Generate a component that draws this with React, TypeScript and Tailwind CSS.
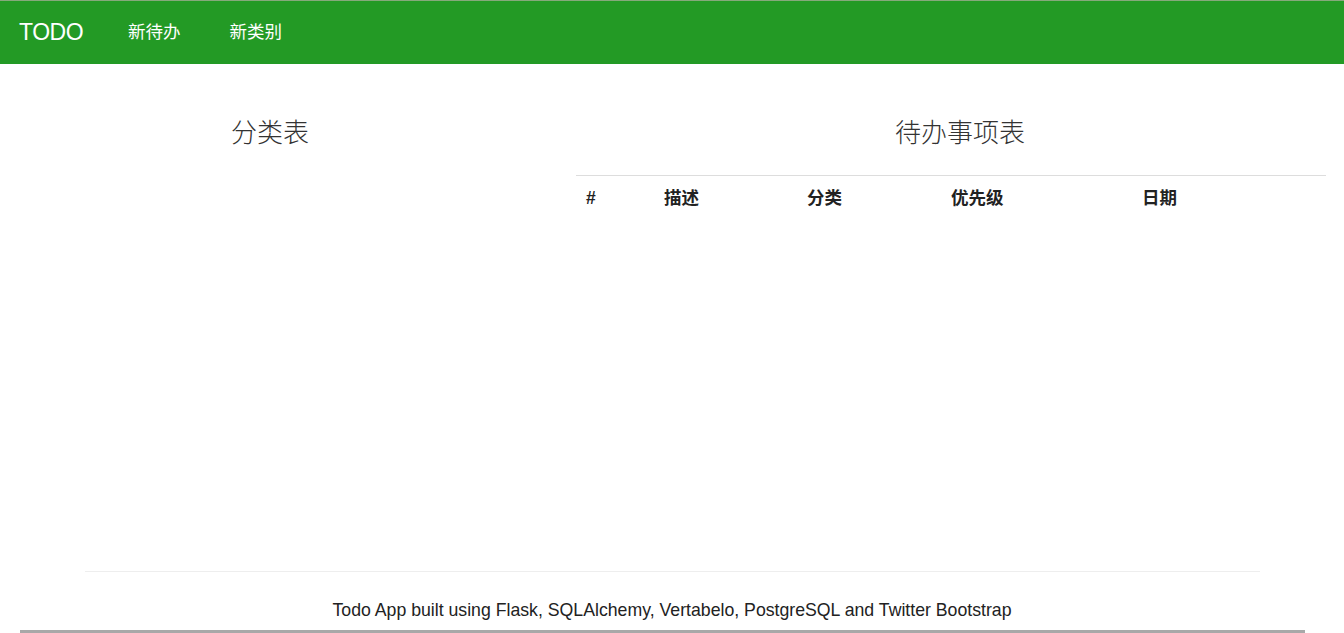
import React from 'react';

const cjk = { fontFamily: '"Liberation Sans", "Noto Sans CJK SC", sans-serif' };

function Navbar() {
  return (
    <nav className="h-[64px] bg-[#239a25] border-t border-[#86a97c] flex items-center text-white">
      <span className="ml-[19px] text-[23px] leading-none tracking-[-0.5px]">TODO</span>
      <a className="ml-[45px] text-[17.5px]">新待办</a>
      <a className="ml-[49px] text-[17.5px]">新类别</a>
    </nav>
  );
}

function App() {
  const columns = [
    { label: '#', w: 'w-[78px]' },
    { label: '描述', w: 'w-[143px]' },
    { label: '分类', w: 'w-[144px]' },
    { label: '优先级', w: 'w-[191px]' },
    { label: '日期', w: 'flex-1' },
  ];

  return (
    <div className="h-[633px] flex flex-col bg-white text-[#333] overflow-hidden" style={cjk}>
      <Navbar />

      <main className="flex-1 flex pt-[52px]">
        <section className="w-[540px]">
          <h2 className="text-center text-[26px] font-light leading-[34px]">分类表</h2>
        </section>
        <section className="ml-[36px] w-[750px]">
          <h2 className="text-center pl-[18px] text-[26px] font-light leading-[34px]">待办事项表</h2>
          <table className="mt-[25px] w-full border-t border-[#ddd]">
            <thead>
              <tr className="flex h-[45px] items-center pl-[10px] text-[17.5px]">
                {columns.map((c) => (
                  <th key={c.label} className={`${c.w} text-left font-semibold text-[#222]`}>{c.label}</th>
                ))}
              </tr>
            </thead>
          </table>
        </section>
      </main>

      <footer className="flex flex-col">
        <hr className="mb-[2px] mx-[85px] w-[1175px] border-t border-[#eee]" />
        <p className="mt-[25px] text-center text-[17.7px] leading-[22px] text-[#222]">
          Todo App built using Flask, SQLAlchemy, Vertabelo, PostgreSQL and Twitter Bootstrap
        </p>
        <div className="mt-[9px] ml-[20px] w-[1285px] h-[3px] bg-[#a8a8a8]" />
      </footer>
    </div>
  );
}

export default App;
